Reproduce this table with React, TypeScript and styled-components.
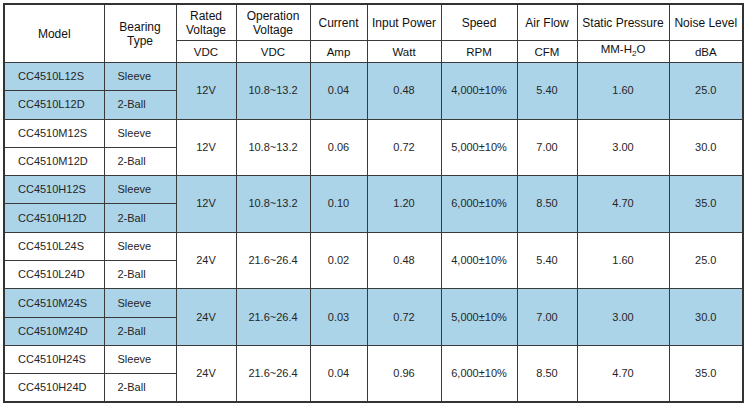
import styled, { createGlobalStyle } from 'styled-components';

const GlobalStyle = createGlobalStyle`
  html, body {
    margin: 0;
    padding: 0;
    background: #ffffff;
  }
  body {
    font-family: "Liberation Sans", Arial, sans-serif;
    color: #222;
  }
`;

const Page = styled.div`
  padding: 3px 0 0 3px;
`;

const Table = styled.table`
  border-collapse: collapse;
  table-layout: fixed;
  width: 739px;
  border: 2px solid #333;
`;

const Head = styled.th<{ $unit?: boolean }>`
  font-weight: normal;
  font-size: ${(p) => (p.$unit ? '11.5px' : '12px')};
  line-height: 14px;
  height: ${(p) => (p.$unit ? '21px' : '35px')};
  padding: 0 2px;
  text-align: center;
  vertical-align: middle;
  border: 1px solid #3a3a3a;
  color: #111;
`;

const Row = styled.tr<{ $blue: boolean }>`
  background: ${(p) => (p.$blue ? '#acd4e8' : '#ffffff')};
  height: 28.3px;
`;

const Cell = styled.td<{ $left?: boolean }>`
  font-size: 11px;
  line-height: 13px;
  padding: 0 ${(p) => (p.$left ? '0 0 13px' : '2px')};
  text-align: ${(p) => (p.$left ? 'left' : 'center')};
  vertical-align: middle;
  border: 1px solid #3a3a3a;
  color: #262626;
`;

const widths = [100, 72, 60, 74, 57, 74, 76, 60, 92, 74];

type Group = {
  code: string;
  volt: string;
  range: string;
  amp: string;
  watt: string;
  rpm: string;
  cfm: string;
  pressure: string;
  noise: string;
};

const groups: Group[] = [
  { code: 'L12', volt: '12V', range: '10.8~13.2', amp: '0.04', watt: '0.48', rpm: '4,000±10%', cfm: '5.40', pressure: '1.60', noise: '25.0' },
  { code: 'M12', volt: '12V', range: '10.8~13.2', amp: '0.06', watt: '0.72', rpm: '5,000±10%', cfm: '7.00', pressure: '3.00', noise: '30.0' },
  { code: 'H12', volt: '12V', range: '10.8~13.2', amp: '0.10', watt: '1.20', rpm: '6,000±10%', cfm: '8.50', pressure: '4.70', noise: '35.0' },
  { code: 'L24', volt: '24V', range: '21.6~26.4', amp: '0.02', watt: '0.48', rpm: '4,000±10%', cfm: '5.40', pressure: '1.60', noise: '25.0' },
  { code: 'M24', volt: '24V', range: '21.6~26.4', amp: '0.03', watt: '0.72', rpm: '5,000±10%', cfm: '7.00', pressure: '3.00', noise: '30.0' },
  { code: 'H24', volt: '24V', range: '21.6~26.4', amp: '0.04', watt: '0.96', rpm: '6,000±10%', cfm: '8.50', pressure: '4.70', noise: '35.0' },
];

const App = () => {
  return (
    <>
      <GlobalStyle />
      <Page>
        <Table>
          <colgroup>
            {widths.map((w, i) => (
              <col key={i} style={{ width: w }} />
            ))}
          </colgroup>
          <thead>
            <tr>
              <Head rowSpan={2}>Model</Head>
              <Head rowSpan={2}>
                Bearing
                <br />
                Type
              </Head>
              <Head>
                Rated
                <br />
                Voltage
              </Head>
              <Head>
                Operation
                <br />
                Voltage
              </Head>
              <Head>Current</Head>
              <Head>Input Power</Head>
              <Head>Speed</Head>
              <Head>Air Flow</Head>
              <Head>Static Pressure</Head>
              <Head>Noise Level</Head>
            </tr>
            <tr>
              <Head $unit>VDC</Head>
              <Head $unit>VDC</Head>
              <Head $unit>Amp</Head>
              <Head $unit>Watt</Head>
              <Head $unit>RPM</Head>
              <Head $unit>CFM</Head>
              <Head $unit>
                MM-H<sub style={{ fontSize: 8 }}>2</sub>O
              </Head>
              <Head $unit>dBA</Head>
            </tr>
          </thead>
          <tbody>
            {groups.map((g, i) => {
              const blue = i % 2 === 0;
              return [
                <Row key={g.code + 'S'} $blue={blue}>
                  <Cell $left>CC4510{g.code}S</Cell>
                  <Cell $left>Sleeve</Cell>
                  <Cell rowSpan={2}>{g.volt}</Cell>
                  <Cell rowSpan={2}>{g.range}</Cell>
                  <Cell rowSpan={2}>{g.amp}</Cell>
                  <Cell rowSpan={2}>{g.watt}</Cell>
                  <Cell rowSpan={2}>{g.rpm}</Cell>
                  <Cell rowSpan={2}>{g.cfm}</Cell>
                  <Cell rowSpan={2}>{g.pressure}</Cell>
                  <Cell rowSpan={2}>{g.noise}</Cell>
                </Row>,
                <Row key={g.code + 'D'} $blue={blue}>
                  <Cell $left>CC4510{g.code}D</Cell>
                  <Cell $left>2-Ball</Cell>
                </Row>,
              ];
            })}
          </tbody>
        </Table>
      </Page>
    </>
  );
};

export default App;
